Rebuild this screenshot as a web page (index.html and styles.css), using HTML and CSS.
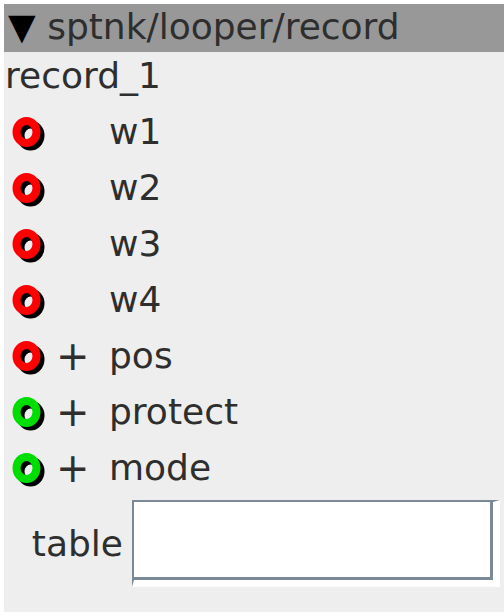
FILE: index.html
```html
<!DOCTYPE html>
<html lang="en">
<head>
    <meta charset="UTF-8">
    <title>sptnk/looper/record</title>
    <link rel="stylesheet" href="styles.css">
</head>
<body>
    <div class="panel">
        <div class="panel-header"><span class="arrow">▼</span> sptnk/looper/record</div>
        <div class="node-name">record_1</div>

        <div class="param">
            <svg class="port" width="40" height="40" viewBox="0 0 40 40">
                <ellipse cx="18.5" cy="23.5" rx="10" ry="11" fill="none" stroke="#000" stroke-width="8"/>
                <ellipse cx="14.5" cy="20" rx="10" ry="11" fill="none" stroke="#ff0000" stroke-width="8"/>
            </svg>
            <span class="toggle"></span>
            <span class="label">w1</span>
        </div>
        <div class="param">
            <svg class="port" width="40" height="40" viewBox="0 0 40 40">
                <ellipse cx="18.5" cy="23.5" rx="10" ry="11" fill="none" stroke="#000" stroke-width="8"/>
                <ellipse cx="14.5" cy="20" rx="10" ry="11" fill="none" stroke="#ff0000" stroke-width="8"/>
            </svg>
            <span class="toggle"></span>
            <span class="label">w2</span>
        </div>
        <div class="param">
            <svg class="port" width="40" height="40" viewBox="0 0 40 40">
                <ellipse cx="18.5" cy="23.5" rx="10" ry="11" fill="none" stroke="#000" stroke-width="8"/>
                <ellipse cx="14.5" cy="20" rx="10" ry="11" fill="none" stroke="#ff0000" stroke-width="8"/>
            </svg>
            <span class="toggle"></span>
            <span class="label">w3</span>
        </div>
        <div class="param">
            <svg class="port" width="40" height="40" viewBox="0 0 40 40">
                <ellipse cx="18.5" cy="23.5" rx="10" ry="11" fill="none" stroke="#000" stroke-width="8"/>
                <ellipse cx="14.5" cy="20" rx="10" ry="11" fill="none" stroke="#ff0000" stroke-width="8"/>
            </svg>
            <span class="toggle"></span>
            <span class="label">w4</span>
        </div>
        <div class="param">
            <svg class="port" width="40" height="40" viewBox="0 0 40 40">
                <ellipse cx="18.5" cy="23.5" rx="10" ry="11" fill="none" stroke="#000" stroke-width="8"/>
                <ellipse cx="14.5" cy="20" rx="10" ry="11" fill="none" stroke="#ff0000" stroke-width="8"/>
            </svg>
            <span class="toggle">+</span>
            <span class="label">pos</span>
        </div>
        <div class="param">
            <svg class="port" width="40" height="40" viewBox="0 0 40 40">
                <ellipse cx="18.5" cy="23.5" rx="10" ry="11" fill="none" stroke="#000" stroke-width="8"/>
                <ellipse cx="14.5" cy="20" rx="10" ry="11" fill="none" stroke="#00dd00" stroke-width="8"/>
            </svg>
            <span class="toggle">+</span>
            <span class="label">protect</span>
        </div>
        <div class="param">
            <svg class="port" width="40" height="40" viewBox="0 0 40 40">
                <ellipse cx="18.5" cy="23.5" rx="10" ry="11" fill="none" stroke="#000" stroke-width="8"/>
                <ellipse cx="14.5" cy="20" rx="10" ry="11" fill="none" stroke="#00dd00" stroke-width="8"/>
            </svg>
            <span class="toggle">+</span>
            <span class="label">mode</span>
        </div>

        <div class="field">
            <label class="field-label" for="table-input">table</label>
            <div class="entry">
                <input type="text" id="table-input">
            </div>
        </div>
    </div>
</body>
</html>
```

FILE: styles.css
```css
body {
    margin: 4px 0 0 4px;
    background-color: #ffffff;
    font-family: "DejaVu Sans", sans-serif;
    font-size: 36px;
    color: #2e2e2e;
    overflow: hidden;
}
.panel {
    background-color: #eeeeee;
    height: 608px;
}
.panel-header {
    background-color: #989898;
    height: 48px;
    line-height: 46px;
    padding-left: 4px;
    white-space: nowrap;
}
.arrow {
    color: #000;
}
.node-name {
    height: 52px;
    line-height: 48px;
    padding-left: 1px;
}
.param {
    display: flex;
    align-items: center;
    height: 56px;
}
.port {
    margin-left: 8px;
    flex: none;
}
.toggle {
    width: 53px;
    padding-left: 4px;
    font-size: 40px;
    line-height: 1;
}
.label {
    line-height: 1;
}
.field {
    display: flex;
    align-items: center;
    margin-top: 4px;
}
.field-label {
    width: 128px;
    text-align: right;
    padding-right: 9px;
    box-sizing: border-box;
}
.entry {
    border-style: solid;
    border-width: 2px 7px 7px 2px;
    border-color: #7b8896 #ffffff #ffffff #7b8896;
    width: 359px;
    height: 78px;
}
.entry input {
    display: block;
    width: 100%;
    height: 100%;
    box-sizing: border-box;
    margin: 0;
    padding: 0 6px;
    border: none;
    border-right: 3px solid #7b8896;
    border-bottom: 3px solid #7b8896;
    background-color: #ffffff;
    font-family: "DejaVu Sans", sans-serif;
    font-size: 32px;
    outline: none;
}
```
